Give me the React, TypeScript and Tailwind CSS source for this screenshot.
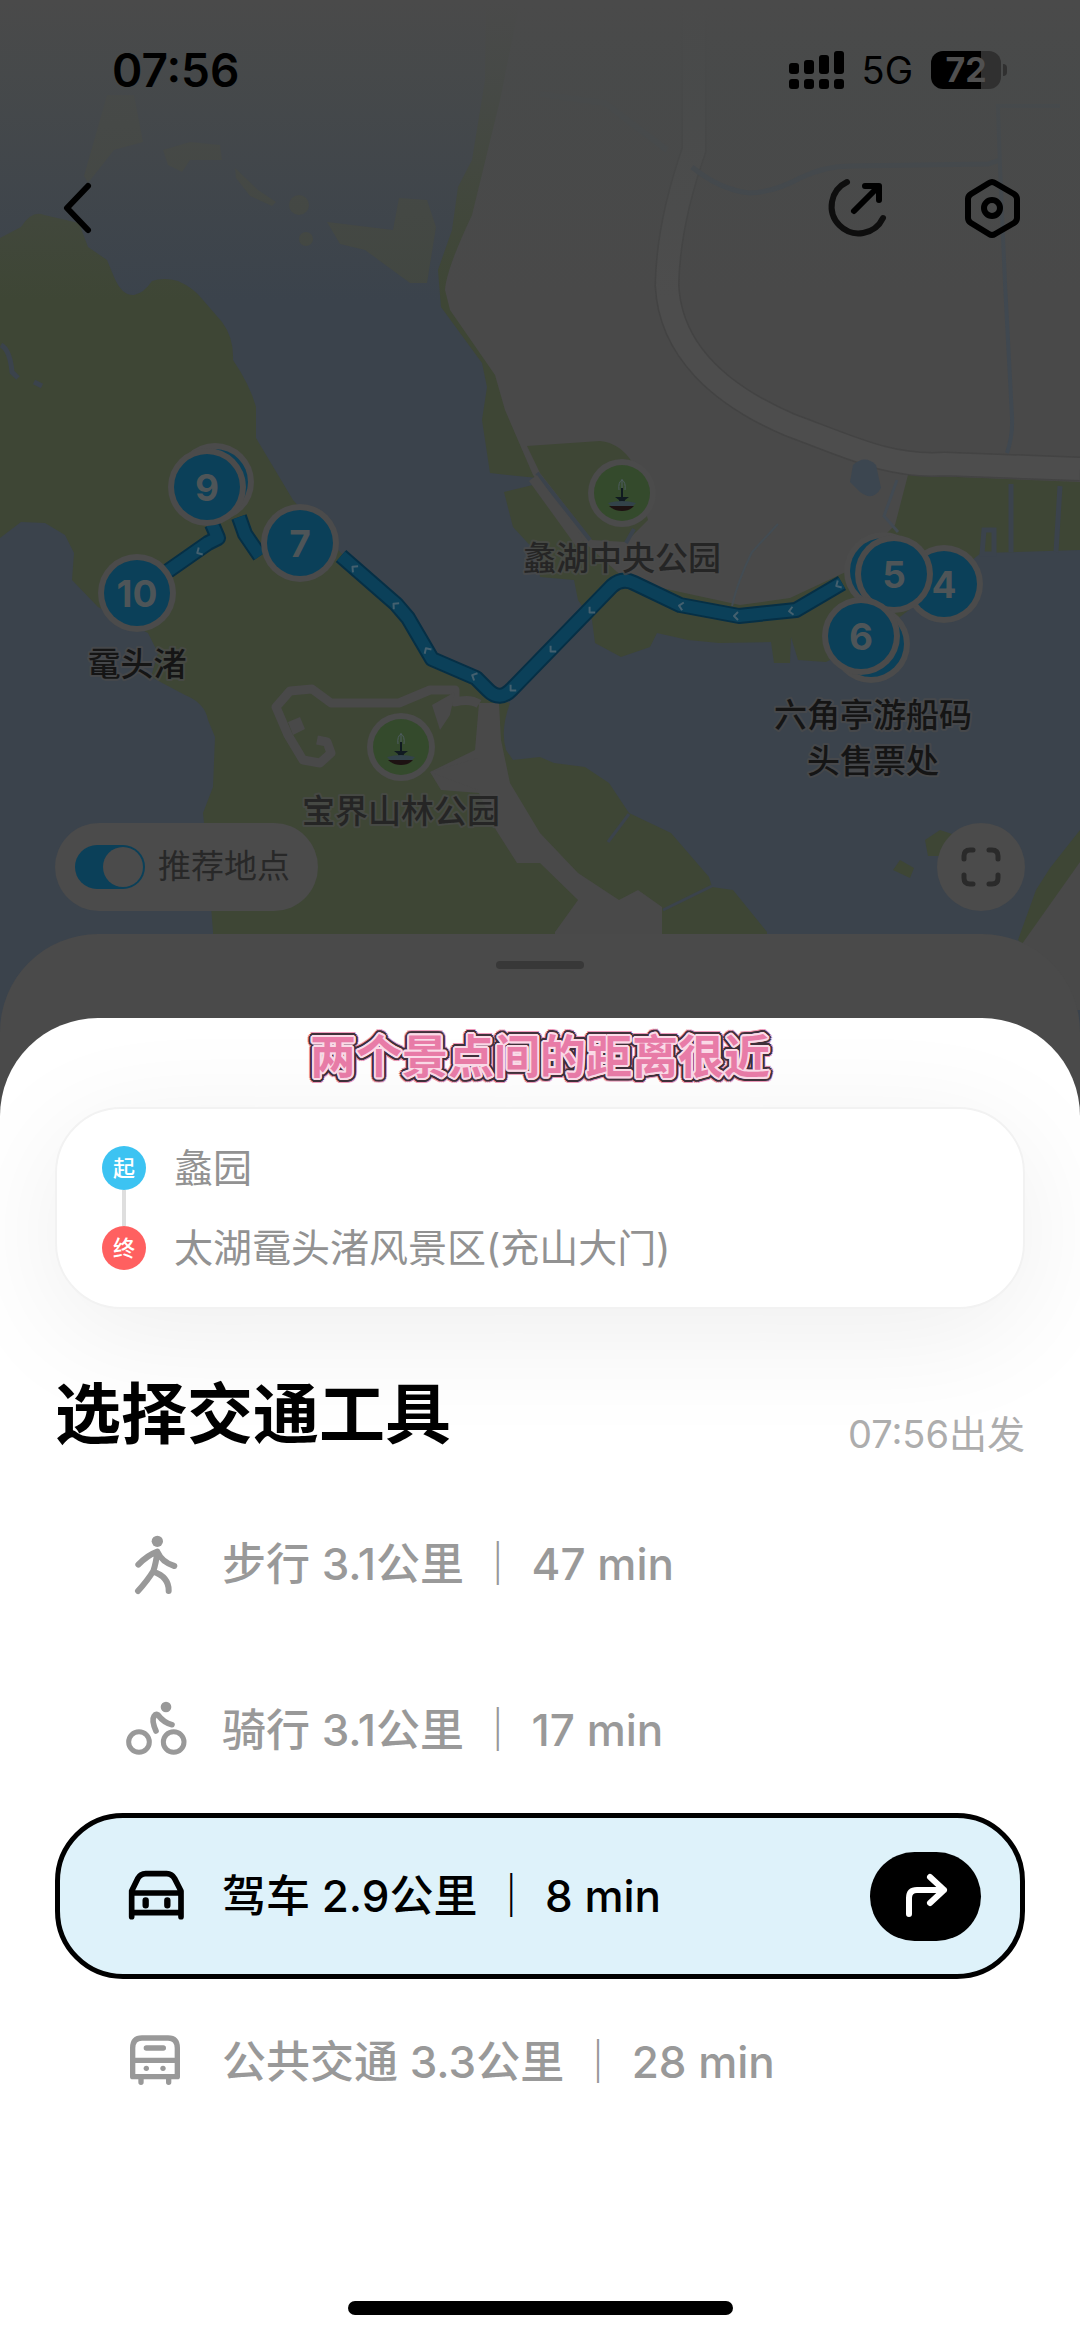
import { useState } from "react";
import type { ReactNode } from "react";

const WATER = "#3b434c";
const GREEN = "#3e4635";
const LAND = "#494949";
const BLUE = "#0b4059";

type Marker = { x: number; y: number; label?: string };

const markers: Marker[] = [
  { x: 215, y: 482 },
  { x: 207, y: 487, label: "9" },
  { x: 300, y: 543, label: "7" },
  { x: 137, y: 593, label: "10" },
  { x: 944, y: 584, label: "4" },
  { x: 883, y: 571 },
  { x: 894, y: 574, label: "5" },
  { x: 871, y: 644 },
  { x: 861, y: 636, label: "6" },
];

const chevrons = [
  { x: 199, y: 552, a: 150 },
  { x: 354, y: 568, a: 220 },
  { x: 395, y: 605, a: 222 },
  { x: 427, y: 650, a: 238 },
  { x: 474, y: 676, a: 205 },
  { x: 512, y: 689, a: 135 },
  { x: 552, y: 650, a: 135 },
  { x: 591, y: 611, a: 135 },
  { x: 681, y: 606, a: 192 },
  { x: 736, y: 616, a: 180 },
  { x: 791, y: 611, a: 172 },
  { x: 838, y: 585, a: 150 },
];

const routes = [
  "M341 556 L396 604 L408 618 L432 659 L476 678 L488 690 Q500 702 512 689 L612 586 Q622 577 634 583 L680 605 L739 616 L796 610 L842 583",
  "M168 571 L208 543 L218 538 L212 524",
  "M239 517 L245 534 L260 556",
];

function Fountain({ x, y }: { x: number; y: number }) {
  return (
    <g transform={`translate(${x} ${y})`}>
      <circle r="34" fill="#4b4b4b" />
      <circle r="28" fill="#344a2c" />
      <g stroke="#4e5c60" strokeWidth="1" fill="none">
        <path d="M0 -14 V-4 M-3 -3 Q-4 -11 0 -13 Q4 -11 3 -3" />
      </g>
      <path d="M-7 4 H7 L3 7 L2 12 H-2 L-3 7 Z M-1 -5 H1 V4 H-1 Z" fill="#101a20" />
      <path d="M-14 10 Q0 6 14 10 L11 13 H-11 Z" fill="#33434a" />
      <path d="M-13 13 H12 Q8 18 0 18 Q-8 18 -13 13 Z" fill="#1d1212" />
    </g>
  );
}

function MapLabel({ x, y, dark, children }: { x: number; y: number; dark?: boolean; children: string }) {
  return (
    <text
      x={x}
      y={y}
      textAnchor="middle"
      dominantBaseline="central"
      fontSize="33"
      fontWeight="500"
      fill={dark ? "#151515" : "#252525"}
      stroke="#4b4b4b"
      strokeWidth="4"
      strokeOpacity="0.7"
      paintOrder="stroke"
      strokeLinejoin="round"
    >
      {children}
    </text>
  );
}

function MapCanvas() {
  return (
    <svg
      className="absolute inset-0 h-full w-full"
      viewBox="0 0 1080 1130"
      preserveAspectRatio="xMidYMin slice"
      role="img"
      aria-label="路线地图"
    >
      <defs>
        <linearGradient id="topFade" x1="0" y1="0" x2="0" y2="1">
          <stop offset="0" stopColor="#4a4a4a" />
          <stop offset="0.25" stopColor="#484a4a" stopOpacity="0.85" />
          <stop offset="1" stopColor="#484a4a" stopOpacity="0" />
        </linearGradient>
      </defs>
      <rect width="1080" height="1130" fill={WATER} />

      {/* western hills */}
      <path
        fill={GREEN}
        d="M0 238 L21 227 Q32 210 44 215 L79 223 L88 247 L107 260 L114 277 Q122 296 134 295 Q144 293 152 281 Q164 277 178 281 Q194 288 203 300 L222 322 Q234 338 233 360 Q250 385 256 407 V438 L293 500 L341 553 L403 610 L430 653 L475 675 L499 700 L510 703 Q500 730 506 750 L513 760 L540 757 L554 763 L585 767 L609 783 L629 813 L671 833 L709 877 L712 887 L733 890 L767 932 L767 1130 L213 1130 L213 932 L207 853 L203 813 L213 787 L215 737 L208 720 Q205 703 185 695 L151 677 L158 653 L148 633 L98 607 L72 580 L74 553 L65 535 L45 523 L21 522 L0 538 Z"
      />
      <path d="M663 910 L712 886 M629 814 L608 842" stroke={WATER} strokeWidth="3" fill="none" />
      <path d="M1 345 Q10 350 12 372 L18 378 M34 382 l8 4" stroke={WATER} strokeWidth="5" fill="none" />

      {/* northern islets */}
      <g fill="#424741">
        <path d="M107 95 L134 95 L143 142 L114 150 L88 183 L84 176 Z" />
        <path d="M163 150 L190 142 L220 145 L222 160 L190 160 L182 172 L168 165 Z" />
        <path d="M235 168 L258 190 L276 202 L272 206 L250 196 L236 178 Z" />
        <circle cx="299" cy="205" r="10" />
        <circle cx="306" cy="239" r="7" />
        <path d="M327 222 L393 230 L399 198 L427 200 L436 227 L427 283 L410 283 L365 250 L340 244 Z" />
      </g>

      {/* eastern shore */}
      <path
        fill={GREEN}
        d="M486 0 L485 80 L472 160 L458 187 L452 230 L438 270 L441 307 L482 363 L487 387 L482 420 L490 473 L537 478 V484 L504 492 L513 527 L537 553 L540 577 L574 580 L578 600 L592 620 L595 643 L621 657 L650 647 L657 633 L688 640 L719 643 L771 642 L774 663 L790 663 L791 637 L798 660 L826 662 L870 640 L905 613 L981 553 L1080 550 V0 Z"
      />
      <path
        fill={LAND}
        d="M520 0 L500 100 L472 215 Q446 270 445 290 L450 310 L495 375 L505 410 L533 475 L545 490 L585 543 L626 580 L680 592 L740 605 L790 598 L850 570 L895 525 L908 475 L1080 482 V0 Z"
      />
      <path fill={GREEN} d="M527 446 L600 441 Q620 443 632 462 L648 520 L626 542 L592 540 L540 473 Z" />
      <path d="M537 473 L590 540 M626 543 l8 -14" stroke={WATER} strokeWidth="4" fill="none" />
      <path d="M533 478 L580 543" stroke={LAND} strokeWidth="10" fill="none" />
      <path d="M1011 484 V552 M1060 486 L1056 552 M984 530 h10 v24 h-12 Z" stroke={WATER} strokeWidth="5" fill="none" />

      {/* south-east corner */}
      <path fill={GREEN} d="M1080 830 L1050 868 L1036 890 L1018 940 L1080 1000 Z M925 840 L940 830 L955 835 L944 856 L928 856 Z M893 870 L900 860 L914 868 L910 878 Z" />
      <path fill={LAND} d="M1080 862 L1022 944 V1010 H1080 Z" />

      {/* southern roads */}
      <path
        fill={LAND}
        d="M479 703 H499 L501 740 L510 783 L540 833 L578 873 L619 900 L638 890 L662 907 V1130 H555 V932 L578 900 L540 863 L517 863 L496 830 L479 793 L441 790 L430 772 L475 750 Z"
      />
      <path
        d="M479 704 Q470 698 455 702 V690 H430 L399 703 H331 L312 689 L290 691 L276 707 L288 735 L303 760 L320 763 L331 753 L327 742 L317 740"
        fill="none"
        stroke={LAND}
        strokeWidth="9"
        strokeLinejoin="round"
      />
      <path d="M432 705 L455 692 L450 715 L440 730 Z M288 722 l12 -5 l5 12 l-12 6 Z M430 772 L478 758 V790 Z" fill={LAND} />

      {/* expressway */}
      <g fill="none">
        <path
          d="M694 0 V150 C680 190 668 235 667 285 C670 350 720 395 790 425 C850 447 890 468 945 464 L1080 469"
          stroke="#434343"
          strokeWidth="25"
        />
        <path
          d="M694 0 V150 C680 190 668 235 667 285 C670 350 720 395 790 425 C850 447 890 468 945 464 L1080 469"
          stroke="#4d4d4d"
          strokeWidth="22"
        />
        <path d="M540 94 L605 103 L667 150" stroke="#464a4d" strokeWidth="6" />
        <path d="M692 167 Q720 190 750 193 Q775 192 800 178 Q825 166 850 166 L988 164 L1000 160" stroke="#41484f" strokeWidth="5" />
        <path d="M1060 106 H998 L1000 167 L1005 283 L1012 417 Q1013 435 1007 453" stroke="#404850" strokeWidth="4" />
        <path d="M778 524 L752 552 Q738 580 732 606" stroke="#434c53" strokeWidth="2" />
        <path d="M897 480 L884 516 L898 532" stroke="#424a52" strokeWidth="3" />
      </g>
      <path d="M853 465 Q865 454 876 465 L881 488 Q873 502 860 492 L850 482 Z" fill="#3c4650" />

      <rect width="1080" height="300" fill="url(#topFade)" />

      {/* planned route */}
      <g fill="none" strokeLinejoin="round">
        {routes.map((d) => (
          <path key={d} d={d} stroke="#062f45" strokeWidth="16" />
        ))}
        {routes.map((d) => (
          <path key={d} d={d} stroke={BLUE} strokeWidth="12" />
        ))}
        {chevrons.map((c) => (
          <path
            key={c.x}
            d="M-2 -4 L2 0 L-2 4"
            transform={`translate(${c.x} ${c.y}) rotate(${c.a})`}
            stroke="#44606f"
            strokeWidth="2"
          />
        ))}
      </g>

      <Fountain x={401} y={747} />
      <Fountain x={622} y={493} />
      <MapLabel x={401} y={811}>宝界山林公园</MapLabel>
      <MapLabel x={622} y={558}>蠡湖中央公园</MapLabel>
      <MapLabel x={137} y={664} dark>鼋头渚</MapLabel>
      <MapLabel x={873} y={715} dark>六角亭游船码</MapLabel>
      <MapLabel x={873} y={761} dark>头售票处</MapLabel>

      {markers.map((m) => (
        <g key={`${m.x}-${m.y}`}>
          <circle cx={m.x} cy={m.y} r="39" fill="#4b4b4b" />
          <circle cx={m.x} cy={m.y} r="33" fill={BLUE} />
          {m.label && (
            <text
              x={m.x}
              y={m.y + 14}
              textAnchor="middle"
              fontSize="37"
              fontWeight="700"
              fill="#4e5558"
            >
              {m.label}
            </text>
          )}
        </g>
      ))}
    </svg>
  );
}

function StatusBar() {
  return (
    <div className="relative flex h-[93px] items-end justify-between pr-[73px] pl-[112px] text-black">
      <time className="text-[46px] leading-[46px] font-semibold">07:56</time>
      <div className="flex h-[46px] items-center gap-[18px]">
        <svg className="h-[38px] w-[55px]" viewBox="0 0 55 38" aria-label="信号">
          {[12, 9, 4, 0].map((top, i) => (
            <g key={top}>
              <rect x={i * 15} y={top} width="10" height={23 - top} rx="3" />
              <rect x={i * 15} y="28" width="10" height="10" rx="3" />
            </g>
          ))}
        </svg>
        <span className="text-[38px] leading-[46px]">5G</span>
        <div className="flex items-center gap-[2px]">
          <div className="flex h-[38px] w-[70px] items-center justify-center rounded-[12px] bg-linear-to-r from-black from-72% to-[#303030] to-72% text-[34px] leading-none font-bold text-[#505050]">
            72
          </div>
          <div className="h-[12px] w-[4px] rounded-r-full bg-[#303030]" />
        </div>
      </div>
    </div>
  );
}

function NavBar() {
  return (
    <nav className="relative mt-[83px] flex h-[64px] items-center justify-between px-[56px] text-black">
      <button type="button" aria-label="返回">
        <svg className="h-[64px] w-[44px]" viewBox="56 176 44 64" fill="none" stroke="currentColor" strokeWidth="6" strokeLinecap="round" strokeLinejoin="round">
          <path d="M88 186 L67 208 L88 230" />
        </svg>
      </button>
      <div className="flex gap-[70px]">
        <button type="button" aria-label="分享">
          <svg className="h-[64px] w-[64px]" viewBox="828 176 64 64" fill="none" stroke="currentColor" strokeWidth="6" strokeLinecap="round" strokeLinejoin="round">
            <path d="M849 182 A27 27 0 1 0 885 218" stroke="#0e0e0e" />
            <path d="M856 211 L880 187 M867 186 H881 V200" />
          </svg>
        </button>
        <button type="button" aria-label="设置">
          <svg className="h-[64px] w-[64px]" viewBox="960 176 64 64" fill="none" stroke="currentColor" strokeWidth="6" strokeLinejoin="round">
            <path d="M989 183 Q992 181 995 183 L1014 194 Q1017 196 1017 199 V218 Q1017 221 1014 223 L995 234 Q992 236 989 234 L971 223 Q968 221 968 218 V199 Q968 196 971 194 Z" />
            <circle cx="992" cy="208" r="8" />
          </svg>
        </button>
      </div>
    </nav>
  );
}

function MapControls() {
  const [on, setOn] = useState(true);
  return (
    <div className="relative mt-auto flex items-center justify-between px-[55px]">
      <label className="flex h-[88px] items-center gap-[13px] rounded-full bg-[#4b4b4b] pr-[28px] pl-[20px] text-[33px] text-[#282828]">
        <input type="checkbox" className="peer sr-only" checked={on} onChange={() => setOn(!on)} />
        <span className="flex h-[44px] w-[70px] items-center justify-start rounded-full bg-[#333333] p-[2px] peer-checked:justify-end peer-checked:bg-[#0b4059]">
          <span className="size-[40px] rounded-full bg-[#4b4b4b]" />
        </span>
        推荐地点
      </label>
      <button type="button" aria-label="全屏" className="flex size-[88px] items-center justify-center rounded-full bg-[#4b4b4b]">
        <svg className="size-[40px]" viewBox="0 0 40 40" fill="none" stroke="#2a2a2a" strokeWidth="5" strokeLinecap="round">
          <path d="M3 12 V9 Q3 3 9 3 H12 M28 3 H31 Q37 3 37 9 V12 M37 28 V31 Q37 37 31 37 H28 M12 37 H9 Q3 37 3 31 V28" />
        </svg>
      </button>
    </div>
  );
}

/* Builds an outline of one colour from shadows laid on a circle. */
function ring(radius: number, color: string) {
  return Array.from({ length: 16 }, (_, i) => {
    const a = (i * Math.PI) / 8;
    return `${(Math.cos(a) * radius).toFixed(1)}px ${(Math.sin(a) * radius).toFixed(1)}px 0 ${color}`;
  }).join(", ");
}

const captionShadow = [ring(2, "#fbdbe8"), ring(3, "#40303a"), ring(4, "#40303a"), ring(5, "#ee9bbb")].join(", ");

function Caption({ children }: { children: string }) {
  return (
    <p className="text-center text-[46px] leading-[60px] font-bold text-[#e97ca8]" style={{ textShadow: captionShadow }}>
      {children}
    </p>
  );
}

function Stop({ badge, color, children }: { badge: string; color: string; children: string }) {
  return (
    <li className="flex h-[44px] items-center gap-[28px]">
      <span className={`flex size-[44px] items-center justify-center rounded-full text-[22px] font-medium text-white ${color}`}>
        {badge}
      </span>
      <span className="text-[39px] leading-[44px] text-[#929292]">{children}</span>
    </li>
  );
}

type Mode = { id: string; name: string; distance: string; time: string; icon: ReactNode };

const modes: Mode[] = [
  {
    id: "walk",
    name: "步行",
    distance: "3.1公里",
    time: "47 min",
    icon: (
      <svg className="size-[62px]" viewBox="75 99 186 186" fill="none" stroke="currentColor" strokeWidth="18" strokeLinecap="round" strokeLinejoin="round">
        <circle cx="172" cy="124" r="17" fill="currentColor" stroke="none" />
        <path d="M115 194 Q142 166 172 155 Q186 187 223 198 M172 155 Q168 190 160 213 Q143 241 114 273 M160 215 Q207 231 206 273" />
      </svg>
    ),
  },
  {
    id: "ride",
    name: "骑行",
    distance: "3.1公里",
    time: "17 min",
    icon: (
      <svg className="size-[62px]" viewBox="75 597 186 186" fill="none" stroke="currentColor" strokeWidth="17" strokeLinecap="round" strokeLinejoin="round">
        <circle cx="198" cy="621" r="16" fill="currentColor" stroke="none" />
        <circle cx="117" cy="726" r="31" strokeWidth="15" />
        <circle cx="221" cy="726" r="31" strokeWidth="15" />
        <path d="M168 693 Q154 662 162 649 Q167 641 174 645 Q191 668 216 674" />
      </svg>
    ),
  },
  {
    id: "drive",
    name: "驾车",
    distance: "2.9公里",
    time: "8 min",
    icon: (
      <svg className="size-[62px]" viewBox="75 135 186 186" fill="none" stroke="currentColor" strokeWidth="17" strokeLinecap="round" strokeLinejoin="round">
        <path d="M95 290 V213 L113 176 Q121 161 137 161 H200 Q216 161 224 176 L243 213 V290 M95 219 H243 M95 278 H243" />
        <path d="M137 241 V256 M202 241 V256" strokeWidth="19" />
      </svg>
    ),
  },
  {
    id: "transit",
    name: "公共交通",
    distance: "3.3公里",
    time: "28 min",
    icon: (
      <svg className="size-[62px]" viewBox="75 639 186 186" fill="none" stroke="currentColor" strokeWidth="16" strokeLinecap="round" strokeLinejoin="round">
        <path d="M98 776 V690 Q98 660 126 660 H204 Q232 660 232 690 V776 Z M98 727 H232 M139 690 H190 M123 782 V793 M206 782 V793" />
        <circle cx="139" cy="751" r="8" fill="currentColor" stroke="none" />
        <circle cx="189" cy="751" r="8" fill="currentColor" stroke="none" />
      </svg>
    ),
  },
];

function ModeRow({ mode, active, onSelect }: { mode: Mode; active: boolean; onSelect: () => void }) {
  return (
    <div
      className={`flex h-[166px] items-center rounded-[68px] border-[5px] pr-[39px] pl-[65px] ${
        active ? "border-black bg-[#def2fa] text-black" : "border-transparent text-[#999999]"
      }`}
    >
      <label className="flex flex-1 items-center gap-[35px] text-[44px] leading-[60px] font-medium">
        <input type="radio" name="mode" className="sr-only" checked={active} onChange={onSelect} />
        {mode.icon}
        <span>
          {mode.name} {mode.distance} <span className="font-bold">｜</span> {mode.time}
        </span>
      </label>
      {active && (
        <button type="button" aria-label="开始导航" className="flex h-[89px] w-[111px] items-center justify-center rounded-full bg-black text-white">
          <svg className="h-[48px] w-[48px]" viewBox="903 1871 48 48" fill="none" stroke="currentColor" strokeWidth="6" strokeLinecap="round" strokeLinejoin="round">
            <path d="M910 1913 V1897 Q910 1889 918 1889 H945 M931 1876 L945 1889 L931 1902" />
          </svg>
        </button>
      )}
    </div>
  );
}

export default function App() {
  const [selected, setSelected] = useState("drive");
  return (
    <main className="flex min-h-screen flex-col bg-white font-['Inter','Noto_Sans_CJK_SC',sans-serif]">
      <section className="relative flex h-[1130px] flex-col overflow-hidden">
        <MapCanvas />
        <StatusBar />
        <NavBar />
        <MapControls />
        <div className="relative mt-[23px] flex h-[196px] justify-center rounded-t-[98px] bg-[#4a4a4a] pt-[27px]">
          <div className="h-[8px] w-[88px] rounded-full bg-[#383838]" />
        </div>
      </section>

      <section className="relative -mt-[112px] flex flex-1 flex-col overflow-hidden rounded-t-[98px] bg-white px-[55px] pt-[8px]">
        <Caption>两个景点间的距离很近</Caption>

        <ul className="relative mt-[21px] flex flex-col gap-[36px] rounded-[66px] border-2 border-[#f2f2f2] bg-white px-[45px] py-[37px] shadow-[0_24px_120px_rgba(0,0,0,0.07)]">
          <li aria-hidden="true" className="absolute top-[81px] left-[65px] h-[36px] w-[4px] bg-[#dedede]" />
          <Stop badge="起" color="bg-[#3cc3f2]">蠡园</Stop>
          <Stop badge="终" color="bg-[#ff6060]">太湖鼋头渚风景区(充山大门)</Stop>
        </ul>

        <div className="relative mt-[60px] flex items-end justify-between">
          <h1 className="text-[66px] leading-[90px] font-bold text-black">选择交通工具</h1>
          <p className="text-[38px] leading-[50px] text-[#adadad]">07:56出发</p>
        </div>

        <div className="relative mt-[22px] flex flex-col" role="radiogroup" aria-label="选择交通工具">
          {modes.map((m) => (
            <ModeRow key={m.id} mode={m} active={m.id === selected} onSelect={() => setSelected(m.id)} />
          ))}
        </div>

        <div className="relative mt-auto mb-[20px] h-[14px] w-[385px] self-center rounded-full bg-black" />
      </section>
    </main>
  );
}
